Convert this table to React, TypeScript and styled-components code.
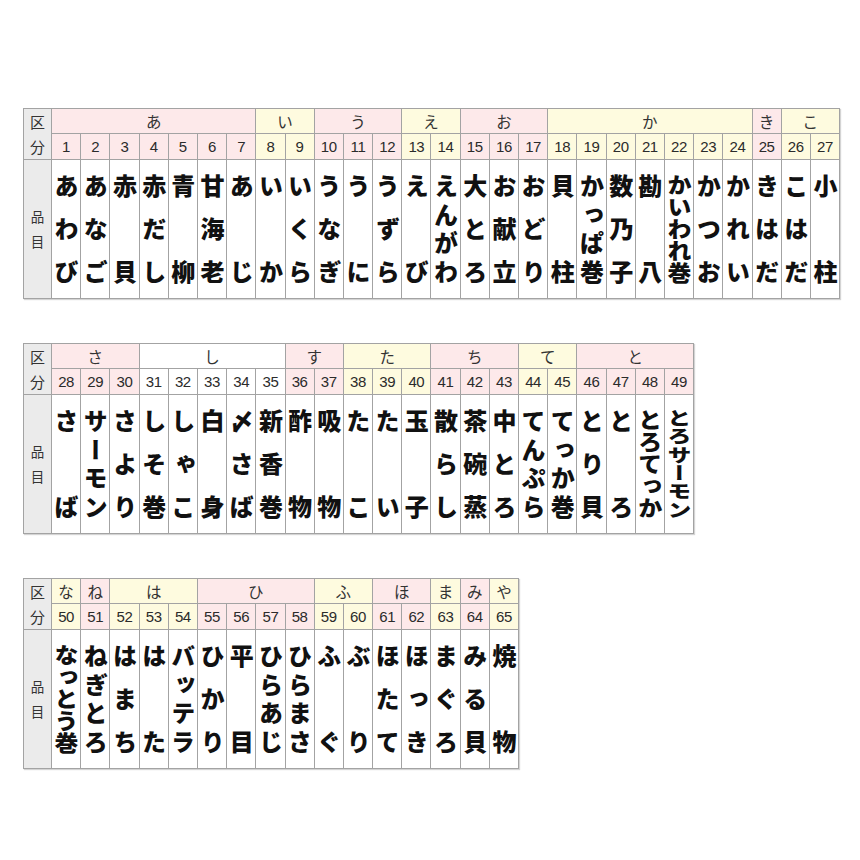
import React from 'react';
import styled, { createGlobalStyle } from 'styled-components';

const GlobalStyle = createGlobalStyle`
  body {
    margin: 0;
    background: #ffffff;
    font-family: "Liberation Sans", "Noto Sans CJK JP", sans-serif;
  }
`

type Tone = 'pink' | 'yellow' | 'white'

const tones: Record<Tone, string> = {
    pink: '#fde9ea',
    yellow: '#fefbdf',
    white: '#ffffff',
}

type Group = { kana: string, tone: Tone, items: string[] }

type Sheet = { start: number, groups: Group[] }

const sheets: Sheet[] = [
    {
        start: 1,
        groups: [
            { kana: 'あ', tone: 'pink', items: ['あわび', 'あなご', '赤貝', '赤だし', '青柳', '甘海老', 'あじ'] },
            { kana: 'い', tone: 'yellow', items: ['いか', 'いくら'] },
            { kana: 'う', tone: 'pink', items: ['うなぎ', 'うに', 'うずら'] },
            { kana: 'え', tone: 'yellow', items: ['えび', 'えんがわ'] },
            { kana: 'お', tone: 'pink', items: ['大とろ', 'お献立', 'おどり'] },
            { kana: 'か', tone: 'yellow', items: ['貝柱', 'かっぱ巻', '数乃子', '勘八', 'かいわれ巻', 'かつお', 'かれい'] },
            { kana: 'き', tone: 'pink', items: ['きはだ'] },
            { kana: 'こ', tone: 'yellow', items: ['こはだ', '小柱'] },
        ],
    },
    {
        start: 28,
        groups: [
            { kana: 'さ', tone: 'pink', items: ['さば', 'サーモン', 'さより'] },
            { kana: 'し', tone: 'white', items: ['しそ巻', 'しゃこ', '白身', '〆さば', '新香巻'] },
            { kana: 'す', tone: 'pink', items: ['酢物', '吸物'] },
            { kana: 'た', tone: 'yellow', items: ['たこ', 'たい', '玉子'] },
            { kana: 'ち', tone: 'pink', items: ['散らし', '茶碗蒸', '中とろ'] },
            { kana: 'て', tone: 'yellow', items: ['てんぷら', 'てっか巻'] },
            { kana: 'と', tone: 'pink', items: ['とり貝', 'とろ', 'とろてっか', 'とろサーモン'] },
        ],
    },
    {
        start: 50,
        groups: [
            { kana: 'な', tone: 'yellow', items: ['なっとう巻'] },
            { kana: 'ね', tone: 'pink', items: ['ねぎとろ'] },
            { kana: 'は', tone: 'yellow', items: ['はまち', 'はた', 'バッテラ'] },
            { kana: 'ひ', tone: 'pink', items: ['ひかり', '平目', 'ひらあじ', 'ひらまさ'] },
            { kana: 'ふ', tone: 'yellow', items: ['ふぐ', 'ぶり'] },
            { kana: 'ほ', tone: 'pink', items: ['ほたて', 'ほっき'] },
            { kana: 'ま', tone: 'yellow', items: ['まぐろ'] },
            { kana: 'み', tone: 'pink', items: ['みる貝'] },
            { kana: 'や', tone: 'yellow', items: ['焼物'] },
        ],
    },
]

// glyph size and the vertical room a name gets inside its cell
const GLYPH = 24
const ROOM = 110

const Page = styled.div`
    padding: 108px 0 40px 23px;
    display: flex;
    flex-direction: column;
    gap: 44px;
`

const Table = styled.div<{ $cols: number }>`
    display: grid;
    grid-template-columns: 27px repeat(${p => p.$cols}, 28.2px);
    grid-template-rows: 24px 25px 138px;
    gap: 1px;
    padding: 1px;
    width: max-content;
    background: #a3a3a3;
    box-shadow: 1px 1px 1px #d4d4d4;
`

const Label = styled.div<{ $head?: boolean }>`
    grid-column: 1;
    grid-row: ${p => p.$head ? '1 / 3' : '3'};
    background: #ebebeb;
    display: flex;
    flex-direction: column;
    align-items: center;
    justify-content: ${p => p.$head ? 'space-around' : 'center'};
    gap: ${p => p.$head ? '0' : '11px'};
    font-family: "Noto Sans CJK JP", sans-serif;
    font-size: ${p => p.$head ? '15px' : '13.5px'};
    line-height: 1;
    color: #333;
`

const Kana = styled.div<{ $tone: Tone, $span: number }>`
    grid-row: 1;
    grid-column: span ${p => p.$span};
    background: ${p => tones[p.$tone]};
    display: flex;
    align-items: center;
    justify-content: center;
    font-family: "Noto Sans CJK JP", sans-serif;
    font-size: 15.5px;
    color: #333;
`

const Num = styled.div<{ $tone: Tone }>`
    grid-row: 2;
    background: ${p => tones[p.$tone]};
    display: flex;
    align-items: center;
    justify-content: center;
    font-family: "Liberation Sans", Arial, sans-serif;
    font-size: 15px;
    color: #2b2b2b;
    letter-spacing: -0.4px;
`

const Item = styled.div`
    grid-row: 3;
    background: #ffffff;
    display: flex;
    justify-content: center;
    padding-top: 14px;
`

const Stack = styled.div<{ $fit: boolean }>`
    writing-mode: vertical-rl;
    display: flex;
    justify-content: ${p => p.$fit ? 'space-between' : 'flex-start'};
    align-items: center;
    transform-origin: top center;
    font-family: "Noto Sans CJK JP", sans-serif;
    font-weight: 900;
    font-size: ${GLYPH}px;
    line-height: 1;
    color: #111;
`

const Glyph = styled.span`
    display: block;
`

const Name: React.FC<{ text: string }> = ({ text }) => {
    const chars = [...text]
    const natural = chars.length * GLYPH
    const fit = natural <= ROOM
    // long names are squeezed vertically to fit the cell
    const style = fit
        ? { height: ROOM }
        : { height: natural, transform: `scaleY(${ROOM / natural})` }
    return (
        <Item>
            <Stack $fit={fit} style={style}>
                {chars.map((c, i) => <Glyph key={i}>{c}</Glyph>)}
            </Stack>
        </Item>
    )
}

const SheetTable: React.FC<{ sheet: Sheet }> = ({ sheet }) => {
    const flat = sheet.groups.flatMap(g => g.items.map(name => ({ name, tone: g.tone })))
    return (
        <Table $cols={flat.length}>
            <Label $head><span>区</span><span>分</span></Label>
            {sheet.groups.map(g => (
                <Kana key={g.kana} $tone={g.tone} $span={g.items.length}>{g.kana}</Kana>
            ))}
            {flat.map((f, i) => (
                <Num key={i} $tone={f.tone}>{sheet.start + i}</Num>
            ))}
            <Label><span>品</span><span>目</span></Label>
            {flat.map((f, i) => <Name key={i} text={f.name} />)}
        </Table>
    )
}

const App: React.FC = () => {
    return (
        <>
            <GlobalStyle />
            <Page>
                {sheets.map(s => <SheetTable key={s.start} sheet={s} />)}
            </Page>
        </>
    )
}

export default App
